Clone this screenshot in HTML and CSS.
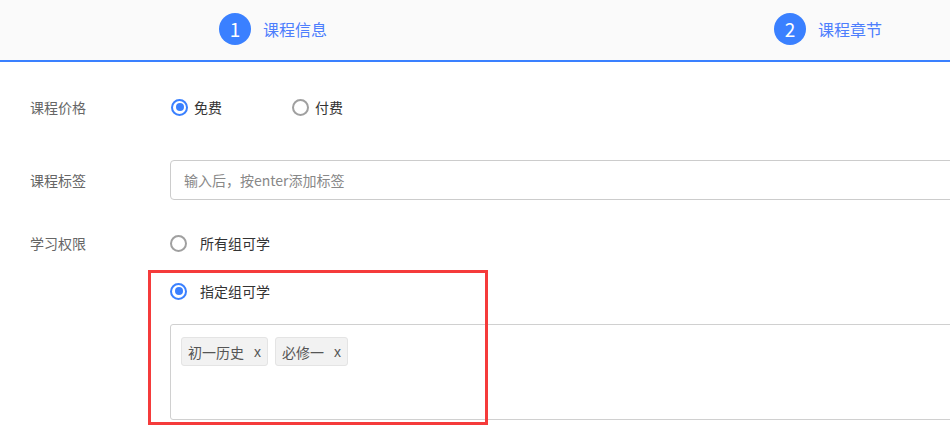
FILE: index.html
```html
<!DOCTYPE html>
<html>
	<head>
		<meta charset="utf-8">
		<title>课程信息</title>
		<link rel="stylesheet" href="styles.css">
	</head>
	<body>
		<div class="steps">
			<div class="step"><span class="step-num">1</span><span class="step-name">课程信息</span></div>
			<div class="step"><span class="step-num">2</span><span class="step-name">课程章节</span></div>
		</div>

		<div class="form">
			<div class="row row-price">
				<div class="label">课程价格</div>
				<div class="control inline">
					<label class="radio-item"><span class="radio checked"></span>免费</label>
					<label class="radio-item"><span class="radio"></span>付费</label>
				</div>
			</div>

			<div class="row row-tags">
				<div class="label">课程标签</div>
				<div class="control">
					<div class="text-input">输入后，按enter添加标签</div>
				</div>
			</div>

			<div class="row row-access">
				<div class="label">学习权限</div>
				<div class="control stack">
					<label class="radio-line"><span class="radio"></span>所有组可学</label>
					<label class="radio-line second"><span class="radio checked"></span>指定组可学</label>
					<div class="tag-box">
						<span class="tag">初一历史<span class="tag-close">x</span></span>
						<span class="tag">必修一<span class="tag-close">x</span></span>
					</div>
					<div class="highlight"></div>
				</div>
			</div>
		</div>
	</body>
</html>
```

FILE: styles.css
```css
html,
body {
	margin: 0;
	background: #ffffff;
	font-family: "Noto Sans CJK SC", "Noto Sans", sans-serif;
	font-size: 14px;
	color: #333333;
}

.steps {
	display: flex;
	height: 60px;
	padding-left: 219px;
	background: #fafafa;
	border-bottom: solid 2px #3a80ff;
	overflow: hidden;
}

.step {
	display: flex;
	align-items: center;
	flex: none;
	width: 555px;
	margin-top: -2px;
}

.step-num {
	width: 32px;
	height: 32px;
	border-radius: 50%;
	background: #3a80ff;
	color: #ffffff;
	font-size: 19px;
	line-height: 32px;
	text-align: center;
}

.step-name {
	margin-left: 12px;
	font-size: 16px;
	color: #4d7efd;
}

.form {
	padding-left: 30px;
	padding-bottom: 20px;
	overflow: hidden;
}

.row {
	display: flex;
}

.label {
	flex: none;
	width: 140px;
	color: #666666;
	line-height: 22px;
}

.control {
	flex: none;
	width: 820px;
}

.row-price {
	height: 90px;
	align-items: center;
}

.row-tags {
	height: 40px;
	margin-top: 8px;
	align-items: center;
}

.row-access {
	margin-top: 32px;
	align-items: flex-start;
}

.inline {
	display: flex;
}

.radio-item {
	display: flex;
	align-items: center;
	width: 121px;
	line-height: 22px;
}

.radio-item .radio {
	margin-left: 1px;
	margin-right: 6px;
}

.radio {
	position: relative;
	box-sizing: border-box;
	display: inline-block;
	width: 17px;
	height: 17px;
	border: solid 2px #a0a0a0;
	border-radius: 50%;
	background: #ffffff;
}

.radio.checked {
	border-color: #3a80ff;
}

.radio.checked::after {
	content: "";
	position: absolute;
	left: 2.5px;
	top: 2.5px;
	width: 8px;
	height: 8px;
	border-radius: 50%;
	background: #3a80ff;
}

.text-input {
	box-sizing: border-box;
	height: 40px;
	padding-left: 13px;
	border: solid 1px #cccccc;
	border-radius: 4px;
	line-height: 38px;
	color: #888888;
}

.stack {
	position: relative;
}

.radio-line {
	display: flex;
	align-items: center;
	height: 22px;
}

.radio-line .radio {
	margin-right: 13px;
}

.radio-line.second {
	margin-top: 26px;
}

.tag-box {
	box-sizing: border-box;
	display: flex;
	gap: 7px;
	height: 96px;
	margin-top: 22px;
	padding: 12px 10px;
	align-items: flex-start;
	border: solid 1px #d0d0d0;
	border-radius: 3px;
}

.tag {
	box-sizing: border-box;
	display: flex;
	align-items: center;
	height: 29px;
	padding: 0 6px;
	background: #f2f2f2;
	border: solid 1px #e4e4e4;
	border-radius: 3px;
	color: #555555;
}

.tag-close {
	margin-left: 10px;
	font-family: "Liberation Sans", sans-serif;
	color: #555555;
}

.highlight {
	position: absolute;
	box-sizing: border-box;
	left: -22px;
	top: 38px;
	width: 340px;
	height: 155px;
	border: solid 3px #f53b3b;
}
```
